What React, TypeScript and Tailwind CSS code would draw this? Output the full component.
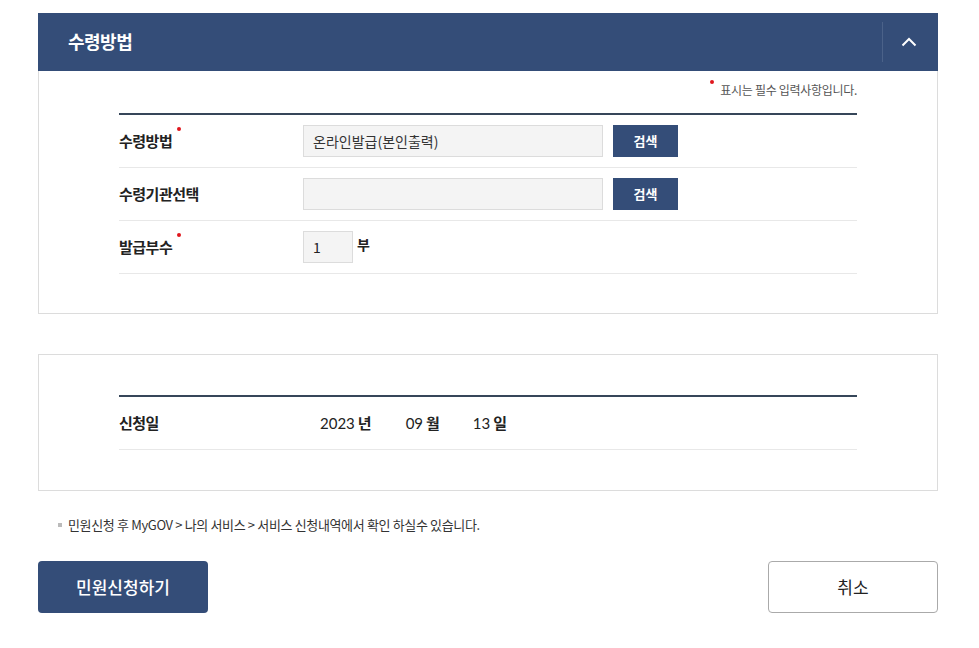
import React from "react";

const F = { fontFamily: '"Noto Sans CJK KR", "Noto Sans", sans-serif' };

function Dot() {
  return <span className="absolute -right-[9px] -top-[3px] w-[4px] h-[4px] rounded-full bg-[#e0161d]" />;
}

function Row({ label, req, children }: { label: string; req?: boolean; children: React.ReactNode }) {
  return (
    <div className="flex items-center h-[53px] border-b border-[#e8e8e8]">
      <div className="w-[184px] text-[15px] font-bold text-[#222] tracking-[-0.5px]">
        <span className="relative">
          {label}
          {req && <Dot />}
        </span>
      </div>
      <div className="flex items-center">{children}</div>
    </div>
  );
}

export default function App() {
  return (
    <div style={F} className="w-[979px] h-[648px] bg-white pt-[13px] px-[38px] text-[#333]">
      <div className="w-[900px]">
        <div className="h-[58px] bg-[#344d78] flex items-center">
          <div className="flex-1 pl-[30px] -mt-[2px] text-[18px] font-bold text-white tracking-[-0.5px]">수령방법</div>
          <div className="w-px h-[40px] bg-[#4b6289]" />
          <div className="w-[55px] flex justify-center pr-[3px]">
            <svg width="16" height="10" viewBox="0 0 16 10" fill="none">
              <path d="M1.5 8.5L8 2L14.5 8.5" stroke="white" strokeWidth="2" />
            </svg>
          </div>
        </div>
        <div className="border border-t-0 border-[#dcdcdc] h-[243px] px-[80px]">
          <div className="h-[42px] flex items-end justify-end pb-[14px] text-[12px] text-[#555] tracking-[-0.3px]">
            <span className="relative">
              <span className="absolute -left-[10px] top-[-1px] w-[4px] h-[4px] rounded-full bg-[#e0161d]" />
              표시는 필수 입력사항입니다.
            </span>
          </div>
          <div className="border-t-2 border-[#364659]">
            <Row label="수령방법" req>
              <div className="w-[300px] h-[32px] bg-[#f4f4f4] border border-[#dcdcdc] flex items-center pl-[9px] text-[14px] text-[#333]">
                온라인발급(본인출력)
              </div>
              <button className="ml-[10px] w-[65px] h-[32px] bg-[#344d78] text-white text-[13px] font-bold">검색</button>
            </Row>
            <Row label="수령기관선택">
              <div className="w-[300px] h-[32px] bg-[#f4f4f4] border border-[#dcdcdc]" />
              <button className="ml-[10px] w-[65px] h-[32px] bg-[#344d78] text-white text-[13px] font-bold">검색</button>
            </Row>
            <Row label="발급부수" req>
              <div className="w-[50px] h-[32px] bg-[#f4f4f4] border border-[#dcdcdc] flex items-center pl-[9px] text-[14px] text-[#222]">1</div>
              <span className="ml-[4px] -mt-[6px] text-[14px] font-bold text-[#222]">부</span>
            </Row>
          </div>
        </div>

        <div className="mt-[40px] border border-[#dcdcdc] h-[137px] px-[80px] pt-[40px]">
          <div className="border-t-2 border-[#364659]">
            <div className="flex items-center h-[53px] border-b border-[#e8e8e8]">
              <div className="w-[200px] text-[15px] font-bold text-[#222] tracking-[-0.5px]">신청일</div>
              <div className="flex items-center text-[15px] text-[#222]">
                <span className="ml-[1px]" style={{ fontFamily: 'Lato, sans-serif' }}>2023</span>
                <span className="ml-[3px] font-bold">년</span>
                <span className="ml-[34px]" style={{ fontFamily: 'Lato, sans-serif' }}>09</span>
                <span className="ml-[3px] font-bold">월</span>
                <span className="ml-[33px]" style={{ fontFamily: 'Lato, sans-serif' }}>13</span>
                <span className="ml-[3px] font-bold">일</span>
              </div>
            </div>
          </div>
        </div>

        <div className="mt-[24px] pl-[20px] flex items-center text-[13px] text-[#333] tracking-[-0.35px]">
          <span className="w-[4px] h-[4px] bg-[#bbb] mr-[6px]" />
          민원신청 후 MyGOV &gt; 나의 서비스 &gt; 서비스 신청내역에서 확인 하실수 있습니다.
        </div>

        <div className="mt-[26px] flex justify-between">
          <button className="w-[170px] h-[52px] bg-[#344d78] rounded-[4px] text-white text-[17px] font-medium">민원신청하기</button>
          <button className="w-[170px] h-[52px] border border-[#aaa] rounded-[4px] text-[#222] text-[17px]">취소</button>
        </div>
      </div>
    </div>
  );
}
